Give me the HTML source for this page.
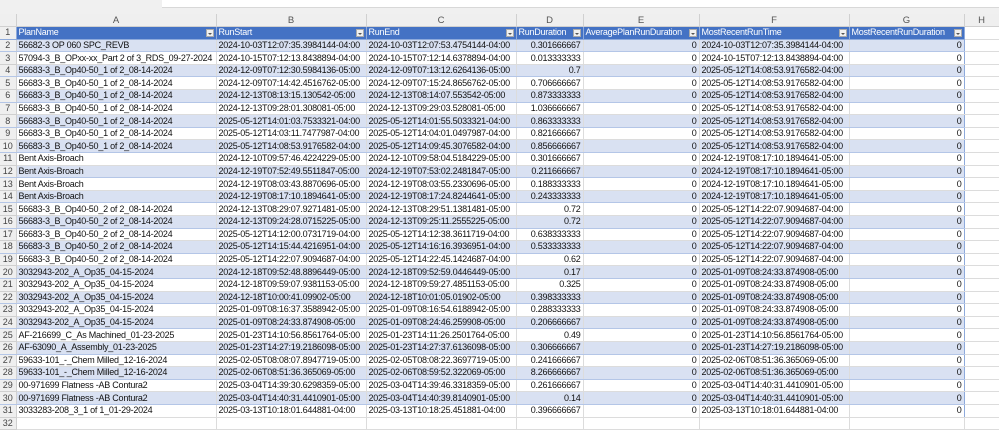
<!DOCTYPE html>
<html><head><meta charset="utf-8"><style>
body{margin:0;width:999px;height:418px;overflow:hidden;background:#fff;font-family:"Liberation Sans",sans-serif;}
.top{position:absolute;left:0;top:0;width:999px;height:14px;background:#f0f0f0;}
.top .fb{position:absolute;left:162px;top:0;right:0;height:7px;background:#fff;border-bottom:1px solid #d8d8d8;}
table{position:absolute;left:0;top:14px;border-collapse:collapse;table-layout:fixed;width:999px;}
td{height:12.6px;padding:0 2px;font-size:9px;letter-spacing:-0.25px;color:#111;white-space:nowrap;overflow:hidden;border-right:1px solid #dcdcdc;border-bottom:1px solid #dcdcdc;line-height:11px;box-sizing:border-box;}
tr.ch td{background:#efefef;color:#555;text-align:center;font-size:9.5px;letter-spacing:0;border-color:#d0d0d0;}
td.rh{background:#efefef;color:#444;text-align:center;padding:0;letter-spacing:0;border-color:#d0d0d0;}
tr.h td{background:#4472c4;color:#fff;position:relative;border-color:#8eaadb;}
tr.h td.rh{background:#efefef;color:#444;}
tr.h td.hh{background:#fff;border-color:#dcdcdc;}
.dd{position:absolute;right:2px;top:2px;width:8px;height:8px;background:#f0f0f0;border:1px solid #aaa;box-sizing:border-box;}
.dd:after{content:"";position:absolute;left:1.5px;top:2.5px;border-left:2px solid transparent;border-right:2px solid transparent;border-top:2px solid #555;}
tr.b td{background:#d9e1f2;border-bottom-color:#b4c6e7;}
tr.b td.rh{background:#efefef;}
tr.b td.hh{background:#fff;border-bottom-color:#dcdcdc;}
td.r{text-align:right;}
td.g{border-right:1px solid #8eaadb;}
</style></head><body>
<div class="top"><div class="fb"></div></div>
<table>
<colgroup><col style="width:16px"><col style="width:200px"><col style="width:150px"><col style="width:150px"><col style="width:67px"><col style="width:116px"><col style="width:150px"><col style="width:115px"><col style="width:35px"></colgroup>
<tr class="ch"><td class="rh"></td><td>A</td><td>B</td><td>C</td><td>D</td><td>E</td><td>F</td><td>G</td><td>H</td></tr>
<tr class="h"><td class="rh">1</td><td>PlanName<span class="dd"></span></td><td>RunStart<span class="dd"></span></td><td>RunEnd<span class="dd"></span></td><td>RunDuration<span class="dd"></span></td><td>AveragePlanRunDuration<span class="dd"></span></td><td>MostRecentRunTime<span class="dd"></span></td><td>MostRecentRunDuration<span class="dd"></span></td><td class="hh"></td></tr>
<tr class="b"><td class="rh">2</td><td>56682-3 OP 060 SPC_REVB</td><td>2024-10-03T12:07:35.3984144-04:00</td><td>2024-10-03T12:07:53.4754144-04:00</td><td class="r">0.301666667</td><td class="r">0</td><td>2024-10-03T12:07:35.3984144-04:00</td><td class="r g">0</td><td class="hh"></td></tr>
<tr><td class="rh">3</td><td>57094-3_B_OPxx-xx_Part 2 of 3_RDS_09-27-2024</td><td>2024-10-15T07:12:13.8438894-04:00</td><td>2024-10-15T07:12:14.6378894-04:00</td><td class="r">0.013333333</td><td class="r">0</td><td>2024-10-15T07:12:13.8438894-04:00</td><td class="r g">0</td><td class="hh"></td></tr>
<tr class="b"><td class="rh">4</td><td>56683-3_B_Op40-50_1 of 2_08-14-2024</td><td>2024-12-09T07:12:30.5984136-05:00</td><td>2024-12-09T07:13:12.6264136-05:00</td><td class="r">0.7</td><td class="r">0</td><td>2025-05-12T14:08:53.9176582-04:00</td><td class="r g">0</td><td class="hh"></td></tr>
<tr><td class="rh">5</td><td>56683-3_B_Op40-50_1 of 2_08-14-2024</td><td>2024-12-09T07:14:42.4516762-05:00</td><td>2024-12-09T07:15:24.8656762-05:00</td><td class="r">0.706666667</td><td class="r">0</td><td>2025-05-12T14:08:53.9176582-04:00</td><td class="r g">0</td><td class="hh"></td></tr>
<tr class="b"><td class="rh">6</td><td>56683-3_B_Op40-50_1 of 2_08-14-2024</td><td>2024-12-13T08:13:15.130542-05:00</td><td>2024-12-13T08:14:07.553542-05:00</td><td class="r">0.873333333</td><td class="r">0</td><td>2025-05-12T14:08:53.9176582-04:00</td><td class="r g">0</td><td class="hh"></td></tr>
<tr><td class="rh">7</td><td>56683-3_B_Op40-50_1 of 2_08-14-2024</td><td>2024-12-13T09:28:01.308081-05:00</td><td>2024-12-13T09:29:03.528081-05:00</td><td class="r">1.036666667</td><td class="r">0</td><td>2025-05-12T14:08:53.9176582-04:00</td><td class="r g">0</td><td class="hh"></td></tr>
<tr class="b"><td class="rh">8</td><td>56683-3_B_Op40-50_1 of 2_08-14-2024</td><td>2025-05-12T14:01:03.7533321-04:00</td><td>2025-05-12T14:01:55.5033321-04:00</td><td class="r">0.863333333</td><td class="r">0</td><td>2025-05-12T14:08:53.9176582-04:00</td><td class="r g">0</td><td class="hh"></td></tr>
<tr><td class="rh">9</td><td>56683-3_B_Op40-50_1 of 2_08-14-2024</td><td>2025-05-12T14:03:11.7477987-04:00</td><td>2025-05-12T14:04:01.0497987-04:00</td><td class="r">0.821666667</td><td class="r">0</td><td>2025-05-12T14:08:53.9176582-04:00</td><td class="r g">0</td><td class="hh"></td></tr>
<tr class="b"><td class="rh">10</td><td>56683-3_B_Op40-50_1 of 2_08-14-2024</td><td>2025-05-12T14:08:53.9176582-04:00</td><td>2025-05-12T14:09:45.3076582-04:00</td><td class="r">0.856666667</td><td class="r">0</td><td>2025-05-12T14:08:53.9176582-04:00</td><td class="r g">0</td><td class="hh"></td></tr>
<tr><td class="rh">11</td><td>Bent Axis-Broach</td><td>2024-12-10T09:57:46.4224229-05:00</td><td>2024-12-10T09:58:04.5184229-05:00</td><td class="r">0.301666667</td><td class="r">0</td><td>2024-12-19T08:17:10.1894641-05:00</td><td class="r g">0</td><td class="hh"></td></tr>
<tr class="b"><td class="rh">12</td><td>Bent Axis-Broach</td><td>2024-12-19T07:52:49.5511847-05:00</td><td>2024-12-19T07:53:02.2481847-05:00</td><td class="r">0.211666667</td><td class="r">0</td><td>2024-12-19T08:17:10.1894641-05:00</td><td class="r g">0</td><td class="hh"></td></tr>
<tr><td class="rh">13</td><td>Bent Axis-Broach</td><td>2024-12-19T08:03:43.8870696-05:00</td><td>2024-12-19T08:03:55.2330696-05:00</td><td class="r">0.188333333</td><td class="r">0</td><td>2024-12-19T08:17:10.1894641-05:00</td><td class="r g">0</td><td class="hh"></td></tr>
<tr class="b"><td class="rh">14</td><td>Bent Axis-Broach</td><td>2024-12-19T08:17:10.1894641-05:00</td><td>2024-12-19T08:17:24.8244641-05:00</td><td class="r">0.243333333</td><td class="r">0</td><td>2024-12-19T08:17:10.1894641-05:00</td><td class="r g">0</td><td class="hh"></td></tr>
<tr><td class="rh">15</td><td>56683-3_B_Op40-50_2 of 2_08-14-2024</td><td>2024-12-13T08:29:07.9271481-05:00</td><td>2024-12-13T08:29:51.1381481-05:00</td><td class="r">0.72</td><td class="r">0</td><td>2025-05-12T14:22:07.9094687-04:00</td><td class="r g">0</td><td class="hh"></td></tr>
<tr class="b"><td class="rh">16</td><td>56683-3_B_Op40-50_2 of 2_08-14-2024</td><td>2024-12-13T09:24:28.0715225-05:00</td><td>2024-12-13T09:25:11.2555225-05:00</td><td class="r">0.72</td><td class="r">0</td><td>2025-05-12T14:22:07.9094687-04:00</td><td class="r g">0</td><td class="hh"></td></tr>
<tr><td class="rh">17</td><td>56683-3_B_Op40-50_2 of 2_08-14-2024</td><td>2025-05-12T14:12:00.0731719-04:00</td><td>2025-05-12T14:12:38.3611719-04:00</td><td class="r">0.638333333</td><td class="r">0</td><td>2025-05-12T14:22:07.9094687-04:00</td><td class="r g">0</td><td class="hh"></td></tr>
<tr class="b"><td class="rh">18</td><td>56683-3_B_Op40-50_2 of 2_08-14-2024</td><td>2025-05-12T14:15:44.4216951-04:00</td><td>2025-05-12T14:16:16.3936951-04:00</td><td class="r">0.533333333</td><td class="r">0</td><td>2025-05-12T14:22:07.9094687-04:00</td><td class="r g">0</td><td class="hh"></td></tr>
<tr><td class="rh">19</td><td>56683-3_B_Op40-50_2 of 2_08-14-2024</td><td>2025-05-12T14:22:07.9094687-04:00</td><td>2025-05-12T14:22:45.1424687-04:00</td><td class="r">0.62</td><td class="r">0</td><td>2025-05-12T14:22:07.9094687-04:00</td><td class="r g">0</td><td class="hh"></td></tr>
<tr class="b"><td class="rh">20</td><td>3032943-202_A_Op35_04-15-2024</td><td>2024-12-18T09:52:48.8896449-05:00</td><td>2024-12-18T09:52:59.0446449-05:00</td><td class="r">0.17</td><td class="r">0</td><td>2025-01-09T08:24:33.874908-05:00</td><td class="r g">0</td><td class="hh"></td></tr>
<tr><td class="rh">21</td><td>3032943-202_A_Op35_04-15-2024</td><td>2024-12-18T09:59:07.9381153-05:00</td><td>2024-12-18T09:59:27.4851153-05:00</td><td class="r">0.325</td><td class="r">0</td><td>2025-01-09T08:24:33.874908-05:00</td><td class="r g">0</td><td class="hh"></td></tr>
<tr class="b"><td class="rh">22</td><td>3032943-202_A_Op35_04-15-2024</td><td>2024-12-18T10:00:41.09902-05:00</td><td>2024-12-18T10:01:05.01902-05:00</td><td class="r">0.398333333</td><td class="r">0</td><td>2025-01-09T08:24:33.874908-05:00</td><td class="r g">0</td><td class="hh"></td></tr>
<tr><td class="rh">23</td><td>3032943-202_A_Op35_04-15-2024</td><td>2025-01-09T08:16:37.3588942-05:00</td><td>2025-01-09T08:16:54.6188942-05:00</td><td class="r">0.288333333</td><td class="r">0</td><td>2025-01-09T08:24:33.874908-05:00</td><td class="r g">0</td><td class="hh"></td></tr>
<tr class="b"><td class="rh">24</td><td>3032943-202_A_Op35_04-15-2024</td><td>2025-01-09T08:24:33.874908-05:00</td><td>2025-01-09T08:24:46.259908-05:00</td><td class="r">0.206666667</td><td class="r">0</td><td>2025-01-09T08:24:33.874908-05:00</td><td class="r g">0</td><td class="hh"></td></tr>
<tr><td class="rh">25</td><td>AF-216699_C_As Machined_01-23-2025</td><td>2025-01-23T14:10:56.8561764-05:00</td><td>2025-01-23T14:11:26.2501764-05:00</td><td class="r">0.49</td><td class="r">0</td><td>2025-01-23T14:10:56.8561764-05:00</td><td class="r g">0</td><td class="hh"></td></tr>
<tr class="b"><td class="rh">26</td><td>AF-63090_A_Assembly_01-23-2025</td><td>2025-01-23T14:27:19.2186098-05:00</td><td>2025-01-23T14:27:37.6136098-05:00</td><td class="r">0.306666667</td><td class="r">0</td><td>2025-01-23T14:27:19.2186098-05:00</td><td class="r g">0</td><td class="hh"></td></tr>
<tr><td class="rh">27</td><td>59633-101_-_Chem Milled_12-16-2024</td><td>2025-02-05T08:08:07.8947719-05:00</td><td>2025-02-05T08:08:22.3697719-05:00</td><td class="r">0.241666667</td><td class="r">0</td><td>2025-02-06T08:51:36.365069-05:00</td><td class="r g">0</td><td class="hh"></td></tr>
<tr class="b"><td class="rh">28</td><td>59633-101_-_Chem Milled_12-16-2024</td><td>2025-02-06T08:51:36.365069-05:00</td><td>2025-02-06T08:59:52.322069-05:00</td><td class="r">8.266666667</td><td class="r">0</td><td>2025-02-06T08:51:36.365069-05:00</td><td class="r g">0</td><td class="hh"></td></tr>
<tr><td class="rh">29</td><td>00-971699 Flatness -AB Contura2</td><td>2025-03-04T14:39:30.6298359-05:00</td><td>2025-03-04T14:39:46.3318359-05:00</td><td class="r">0.261666667</td><td class="r">0</td><td>2025-03-04T14:40:31.4410901-05:00</td><td class="r g">0</td><td class="hh"></td></tr>
<tr class="b"><td class="rh">30</td><td>00-971699 Flatness -AB Contura2</td><td>2025-03-04T14:40:31.4410901-05:00</td><td>2025-03-04T14:40:39.8140901-05:00</td><td class="r">0.14</td><td class="r">0</td><td>2025-03-04T14:40:31.4410901-05:00</td><td class="r g">0</td><td class="hh"></td></tr>
<tr><td class="rh">31</td><td>3033283-208_3_1 of 1_01-29-2024</td><td>2025-03-13T10:18:01.644881-04:00</td><td>2025-03-13T10:18:25.451881-04:00</td><td class="r">0.396666667</td><td class="r">0</td><td>2025-03-13T10:18:01.644881-04:00</td><td class="r g">0</td><td class="hh"></td></tr>
<tr><td class="rh">32</td><td></td><td></td><td></td><td></td><td></td><td></td><td></td><td class="hh"></td></tr>
</table>
</body></html>
